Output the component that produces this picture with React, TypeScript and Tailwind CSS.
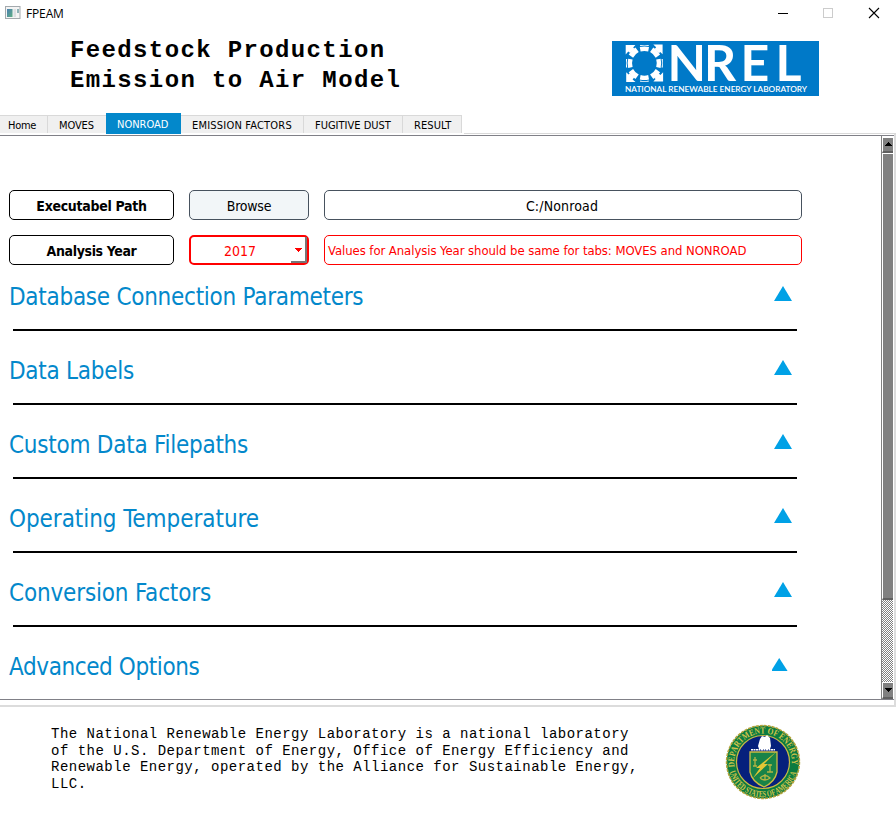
import React from "react";

const ui = "font-['DejaVu_Sans_Condensed','DejaVu_Sans',sans-serif]";
const mono = "font-['Liberation_Mono',monospace]";

const tabs = [
  { name: "Home", box: "w-[48px] pl-[8px] tracking-[-0.3px]" },
  { name: "MOVES", box: "w-[58px] pl-[11px] border-r-0 tracking-[-0.1px]" },
  { name: "NONROAD", box: "" },
  { name: "EMISSION FACTORS", box: "w-[123px] pl-[11px] tracking-[0.2px]" },
  { name: "FUGITIVE DUST", box: "w-[99px] pl-[11px] tracking-[0px]" },
  { name: "RESULT", box: "w-[59px] pl-[11px] tracking-[0.1px]" },
];

const sections = [
  { title: "Database Connection Parameters", spacing: "tracking-[-0.27px]" },
  { title: "Data Labels", spacing: "tracking-[-0.27px]" },
  { title: "Custom Data Filepaths", spacing: "tracking-[-0.25px]" },
  { title: "Operating Temperature", spacing: "tracking-[-0.05px]" },
  { title: "Conversion Factors", spacing: "tracking-[-0.17px]" },
];

function TitleBar() {
  return (
    <div className="flex h-[27px] shrink-0 items-center">
      <svg className="mb-px ml-[5px]" width="16" height="14" viewBox="0 0 16 14">
        <defs>
          <linearGradient id="app" x1="0" y1="0" x2="1" y2="1">
            <stop offset="0" stopColor="#4a7fb0" />
            <stop offset="1" stopColor="#5fae84" />
          </linearGradient>
        </defs>
        <rect x="0.5" y="0.5" width="14.5" height="12" fill="#f4f4f4" stroke="#a3a9ad" />
        <rect x="2" y="3" width="5.5" height="8" fill="url(#app)" />
        <rect x="8.5" y="3" width="2.5" height="8" fill="#dcdfe2" />
        <rect x="12" y="3" width="2" height="4" fill="#8fb3b8" />
      </svg>
      <span className="ml-[5px] font-['Open_Sans','Noto_Sans',sans-serif] text-[12px] leading-none tracking-[-0.15px]">FPEAM</span>
      <svg className="mb-px ml-auto mr-[16px]" width="102" height="12" viewBox="0 0 102 12" fill="none" shapeRendering="crispEdges">
        <path d="M0 6.5h10" stroke="#000" />
        <rect x="45.5" y="1.5" width="9" height="9" stroke="#ccc" />
        <path d="M91 1l10 10M101 1L91 11" stroke="#000" strokeWidth="1.1" shapeRendering="auto" />
      </svg>
    </div>
  );
}

function NrelLogo() {
  return (
    <svg className="block" width="207" height="55" viewBox="612 41 207 55">
      <rect x="612" y="41" width="207" height="55" fill="#0079c8" />
      <g transform="translate(644.4 63.3)">
        {[0, 90, 180, 270].map((a) => (
          <g key={a} transform={`rotate(${a})`} fill="#fff">
            <path d="M-4.6-16.2Q0-17.4 4.6-16.2L3.8-11.8Q0-13 -3.8-11.8Z" />
            <path d="M-4.3-18.4h8.6v1.2q-4.3-1.2-8.6 0Z" />
            <path d="M-18.7-18.2h9.7l-2.2 2.4 1.2 1.2-4.2 4.4-1.9-1.6-2.6 2.9Z" />
            <g transform="rotate(-45)">
              <path d="M-4.8-17.4Q0-18.6 4.8-17.4L4-12Q0-13.2 -4-12Z" />
            </g>
          </g>
        ))}
      </g>
      <text x="667.6 704 740.6 775.6" y="81" fill="#fff" fontFamily="Lato, sans-serif" fontWeight="700" fontSize="50">NREL</text>
      <text x="625" y="92" fill="#fff" fontFamily="Lato, sans-serif" fontWeight="600" fontSize="7.4" textLength="182" lengthAdjust="spacingAndGlyphs">NATIONAL RENEWABLE ENERGY LABORATORY</text>
    </svg>
  );
}

function EnergySeal() {
  return (
    <svg className="block" width="76" height="76" viewBox="-38 -38 76 76">
      <defs>
        <path id="arcTop" d="M-28.2 6A28.8 28.8 0 1 1 28.2 6" />
        <path id="arcBottom" d="M-34 9A35.2 35.2 0 0 0 34 9" />
      </defs>
      <circle r="36.4" fill="#0b7b40" stroke="#b3a43a" strokeWidth="1.6" strokeDasharray="3 1" />
      <circle r="26.5" fill="#06207c" stroke="#c9b945" strokeWidth="1.2" />
      <g fill="#d5c44c" fontFamily="Liberation Serif, serif" fontWeight="700" fontSize="9">
        <text><textPath href="#arcTop" startOffset="1" textLength="98" lengthAdjust="spacingAndGlyphs">DEPARTMENT OF ENERGY</textPath></text>
        <text><textPath href="#arcBottom" startOffset="1" textLength="89" lengthAdjust="spacingAndGlyphs">UNITED STATES OF AMERICA</textPath></text>
      </g>
      <path d="M-5-16L-3-23L-1-26L2-25L4-27L7-24L8-16L7-13H-4Z" fill="#fff" />
      <path d="M-12-12.3H12" stroke="#fff" strokeWidth="1.5" strokeDasharray="2 .5" />
      <path d="M-13-10H14V10Q12 20 1 25Q-11 20-13 10Z" fill="#188348" stroke="#cdbc42" strokeWidth="1.3" />
      <path d="M13-10L1 2L5 2L-10 16L-3 6L-7 6Z" fill="#e2c735" />
      <path d="M-8-5v9M-10-2h4M-10 4h4M7 2v8M5 3h4M4 10h6M-3 16q5-5 10 0q-5 4-10 0M2 12v6" fill="none" stroke="#b3b444" strokeWidth="1.3" />
    </svg>
  );
}

function Triangle({ small }: { small?: boolean }) {
  return small ? (
    <svg className="block" width="16" height="13" viewBox="0 0 16 13"><path d="M7.2 0L15.6 13H0V11.5Z" fill="#00a1e6" /></svg>
  ) : (
    <svg className="block" width="18" height="15" viewBox="0 0 18 15"><path d="M9 0L18 15H0Z" fill="#00a1e6" /></svg>
  );
}

function Tabs() {
  return (
    <div className={`${ui} flex h-[21px] shrink-0 items-end text-[11px] leading-none`}>
      {tabs.map((t) =>
        t.name === "NONROAD" ? (
          <div key={t.name} className="flex h-[21px] w-[75px] items-center whitespace-nowrap bg-[#0388cb] pl-[11px] pt-px text-white tracking-[0px]">{t.name}</div>
        ) : (
          <div key={t.name} className={`mb-px flex h-[18px] items-center whitespace-nowrap border-r border-t border-[#d9d9d9] bg-[#f0f0f0] pt-px ${t.box}`}>{t.name}</div>
        )
      )}
      <div className="ml-[2px] h-px flex-1 bg-[#d9d9d9]" />
    </div>
  );
}

function ScrollBar() {
  return (
    <div className="flex w-[12px] shrink-0 flex-col border-l border-[#808080] bg-[repeating-conic-gradient(#808080_0_25%,#fff_0_50%)] bg-[length:2px_2px]">
      <div className="flex h-[17px] items-center justify-center border-b-2 border-l border-t-2 border-b-[#606060] border-l-white border-t-white bg-[#808080]">
        <svg className="mb-px" width="7" height="4" viewBox="0 0 7 4" shapeRendering="crispEdges"><path d="M3 0h1v1h1v1h1v1h1v1H0V3h1V2h1V1h1Z" /></svg>
      </div>
      <div className="h-[447px] border-b-2 border-l border-t border-b-[#606060] border-l-white border-t-white bg-[#808080]" />
      <div className="mt-auto flex h-[17px] items-center justify-center border-b-2 border-l border-t border-b-[#606060] border-l-white border-t-white bg-[#808080]">
        <svg width="7" height="4" viewBox="0 0 7 4" shapeRendering="crispEdges"><path d="M0 0h7v1H6v1H5v1H4v1H3V3H2V2H1V1H0Z" /></svg>
      </div>
    </div>
  );
}

export default function App() {
  return (
    <div className="flex h-[815px] w-[896px] flex-col overflow-hidden bg-white text-black">
      <TitleBar />
      <header className="flex h-[86px] shrink-0 items-start justify-between pl-[70px] pr-[77px]">
        <h1 className={`${mono} mt-[9px] whitespace-pre text-[24px] font-bold leading-[30px] tracking-[1.37px]`}>{"Feedstock Production\nEmission to Air Model"}</h1>
        <div className="mt-[14px]"><NrelLogo /></div>
      </header>
      <Tabs />
      <div className="flex h-[573px] shrink-0 border-b-2 border-r-2 border-[#dcdcdc] pb-[5px] pt-px">
        <div className="flex flex-1 border-b border-t border-[#808087]">
          <main className={`${ui} min-w-0 flex-1 pl-[9px] pt-[54px]`}>
            <div className="grid grid-cols-[165px_120px_478px] gap-[15px] text-[14px] leading-none">
              <div className="flex h-[30px] items-center justify-center rounded-[5px] border border-black pt-px font-bold tracking-[-0.3px]">Executabel Path</div>
              <div className="flex h-[30px] items-center justify-center rounded-[5px] border border-[#47525e] bg-[#f2f6f8] pt-px tracking-[-0.25px]">Browse</div>
              <div className="flex h-[30px] items-center justify-center rounded-[5px] border border-[#47525e] pr-[2px] pt-px tracking-[0.15px]">C:/Nonroad</div>
              <div className="flex h-[30px] items-center justify-center rounded-[5px] border border-black pt-px font-bold tracking-[-0.35px]">Analysis Year</div>
              <div className="flex h-[30px] items-center rounded-[5px] border-2 border-[#f00] pl-[33px] text-[#f00]">
                <span className="pt-px">2017</span>
                <span className="ml-auto flex h-full w-[16px] items-center justify-center border-b-2 border-r-2 border-[#777] pt-[2px]">
                  <svg width="7" height="4" viewBox="0 0 7 4" shapeRendering="crispEdges"><path d="M0 0h7v1H6v1H5v1H4v1H3V3H2V2H1V1H0Z" fill="#f00" /></svg>
                </span>
              </div>
              <div className="flex h-[30px] items-center whitespace-nowrap rounded-[5px] border border-[#f00] pl-[3px] pt-px text-[13px] tracking-[-0.07px] text-[#f00]">Values for Analysis Year should be same for tabs: MOVES and NONROAD</div>
            </div>
            <div className="text-[24px] text-[#0388cb]">
              {sections.map((s) => (
                <section key={s.title} className="mb-[8px] h-[66px] w-[793px]">
                  <div className="flex h-[64px] items-start justify-between pr-[10px]">
                    <h2 className={`mt-[17px] whitespace-nowrap leading-[30px] ${s.spacing}`}>{s.title}</h2>
                    <div className="mt-[21px]"><Triangle /></div>
                  </div>
                  <div className="ml-[4px] mr-[5px] h-[2px] bg-black" />
                </section>
              ))}
              <section className="flex w-[793px] items-start justify-between pr-[14px]">
                <h2 className="mt-[17px] whitespace-nowrap leading-[30px] tracking-[-0.4px]">Advanced Options</h2>
                <div className="mt-[23px]"><Triangle small /></div>
              </section>
            </div>
          </main>
          <ScrollBar />
          <div className="w-px bg-white" />
        </div>
      </div>
      <footer className="flex flex-1 items-start justify-between pl-[51px] pr-[95px]">
        <p className={`${mono} mt-[19px] whitespace-pre text-[14px] leading-[16.6px] tracking-[0.49px]`}>{"The National Renewable Energy Laboratory is a national laboratory\nof the U.S. Department of Energy, Office of Energy Efficiency and\nRenewable Energy, operated by the Alliance for Sustainable Energy,\nLLC."}</p>
        <div className="mt-[17px]"><EnergySeal /></div>
      </footer>
    </div>
  );
}
